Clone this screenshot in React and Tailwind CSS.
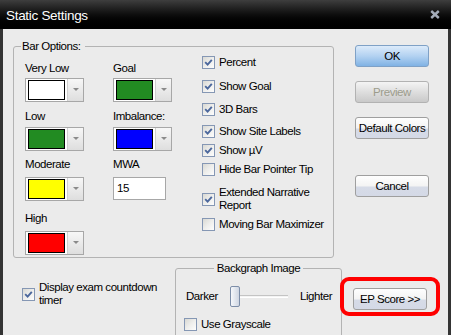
import React from "react";

function Check({ checked }) {
  return (
    <span className="w-[13px] h-[13px] shrink-0 border border-[#8597b4] bg-gradient-to-br from-[#d9d9d4] via-[#eeeeec] to-[#fdfdfd] flex items-center justify-center">
      {checked && (
        <svg width="9" height="9" viewBox="0 0 9 9">
          <path d="M1.2 4.2 L3.6 6.6 L7.8 1.8" stroke="#4b679c" strokeWidth="1.9" fill="none" />
        </svg>
      )}
    </span>
  );
}

function CheckRow({ checked, children, className = "" }) {
  return (
    <div className={"flex items-center gap-[4px] " + className}>
      <Check checked={checked} />
      <span>{children}</span>
    </div>
  );
}

function Swatch({ color, className = "" }) {
  return (
    <div className={"w-[59px] h-[24px] border border-[#a7a7a7] flex " + className}>
      <div className="w-[41px] bg-white px-[2px] py-[1px] flex">
        <div className="flex-1 border border-black" style={{ background: color }} />
      </div>
      <div className="flex-1 border-l border-[#cfcfcf] bg-gradient-to-b from-[#f7f7f7] to-[#dedede] flex items-center justify-center">
        <svg width="6" height="4" viewBox="0 0 6 4">
          <path d="M0 0 H6 L3 3 Z" fill="#8a8a8a" />
        </svg>
      </div>
    </div>
  );
}

function Btn({ children, variant = "normal", className = "" }) {
  const styles = {
    ok: "border-[#7fa1c6] bg-gradient-to-b from-[#dcebfa] via-[#b3d2f1] to-[#80b2e4] text-black",
    disabled: "border-[#b2b2b2] bg-gradient-to-b from-[#f4f4f4] via-[#dedede] to-[#c9c9c9] text-[#9c9c8c]",
    normal: "border-[#9f9f9f] bg-[linear-gradient(to_bottom,#fefefe_0%,#f3f3f3_52%,#d6dbe7_53%,#d4d9e6_100%)] text-black",
  };
  return (
    <div className={"w-[74px] h-[22px] rounded-[3px] border flex items-center justify-center whitespace-nowrap " + styles[variant] + " " + className}>
      {children}
    </div>
  );
}

export default function App() {
  return (
    <div className="w-[451px] h-[335px] overflow-hidden flex flex-col font-['Liberation_Sans',Arial,sans-serif] text-[11.5px] tracking-[-0.45px] leading-[13px] text-black">
      <div className="h-[29px] shrink-0 flex items-center justify-between pl-[6px] pr-[11px] bg-gradient-to-b from-[#3e3e3e] via-[#0e0e0e] to-[#000000]">
        <span className="text-[13.5px] tracking-[-0.3px] text-white pt-[1px]">Static Settings</span>
        <svg width="10" height="9" viewBox="0 0 10 9">
          <path d="M1.2 1 L8.8 8 M8.8 1 L1.2 8" stroke="#a4acb9" strokeWidth="2.4" />
        </svg>
      </div>
      <div className="flex-1 bg-[#ebebeb] border-x-[3px] border-[#343434]">
        <div className="flex items-start">
          <fieldset className="ml-[10px] mt-[11px] w-[321px] h-[218px] border border-[#b3b3b3] rounded-[3px] pl-[11px]">
            <legend className="ml-[-4px] pl-[1px] pr-[4px] leading-[13px]">Bar Options:</legend>
            <div className="flex">
              <div className="w-[88px] flex flex-col">
                <span className="mt-[9px]">Very Low</span>
                <Swatch color="#ffffff" className="mt-[3px]" />
                <span className="mt-[8px]">Low</span>
                <Swatch color="#228b22" className="mt-[4px]" />
                <span className="mt-[7px]">Moderate</span>
                <Swatch color="#ffff00" className="mt-[6px]" />
                <span className="mt-[11px]">High</span>
                <Swatch color="#ff0000" className="mt-[6px]" />
              </div>
              <div className="w-[89px] flex flex-col">
                <span className="mt-[9px]">Goal</span>
                <Swatch color="#228b22" className="mt-[3px]" />
                <span className="mt-[8px]">Imbalance:</span>
                <Swatch color="#0000ff" className="mt-[4px]" />
                <span className="mt-[7px]">MWA</span>
                <div className="mt-[6px] w-[53px] h-[23px] border border-[#a7a7a7] bg-white flex items-center pl-[3px]">15</div>
              </div>
              <div className="flex flex-col">
                <CheckRow checked className="mt-[3px]">Percent</CheckRow>
                <CheckRow checked className="mt-[11px]">Show Goal</CheckRow>
                <CheckRow checked className="mt-[10px]">3D Bars</CheckRow>
                <CheckRow checked className="mt-[9px]">Show Site Labels</CheckRow>
                <CheckRow checked className="mt-[6px]">Show µV</CheckRow>
                <CheckRow className="mt-[6px]">Hide Bar Pointer Tip</CheckRow>
                <CheckRow checked className="mt-[10px]">
                  Extended Narrative
                  <br />
                  Report
                </CheckRow>
                <CheckRow className="mt-[6px] whitespace-nowrap">Moving Bar Maximizer</CheckRow>
              </div>
            </div>
          </fieldset>
          <div className="ml-[21px] mt-[16px] flex flex-col w-[74px]">
            <Btn variant="ok">OK</Btn>
            <Btn variant="disabled" className="mt-[14px]">Preview</Btn>
            <Btn className="mt-[14px]">Default Colors</Btn>
            <Btn className="mt-[36px]">Cancel</Btn>
          </div>
        </div>
        <div className="flex items-start mt-[4px]">
          <div className="ml-[19px] w-[153px] mt-[19px] flex items-center gap-[4px]">
            <Check checked />
            <span className="w-[130px]">Display exam countdown timer</span>
          </div>
          <fieldset className="w-[167px] h-[100px] border border-[#b3b3b3] rounded-[3px] px-[8px]">
            <legend className="mx-auto px-[3px] leading-[13px]">Backgraph Image</legend>
            <div className="mt-[11px] h-[21px] flex items-center">
              <span className="ml-[2px] w-[44px]">Darker</span>
              <div className="w-[58px] h-[21px] relative flex items-center">
                <div className="absolute left-[8px] right-0 top-[9px] h-[3px] border-t border-[#c4c4c4] bg-[#f4f4f4] border-b border-b-white" />
                <div className="relative w-[10px] h-[21px] rounded-[2px] border border-[#7d8ea8] bg-gradient-to-r from-[#f6f8fb] to-[#cfd6e2]" />
              </div>
              <span className="ml-[12px]">Lighter</span>
            </div>
            <CheckRow className="mt-[11px]">Use Grayscale</CheckRow>
          </fieldset>
          <div className="ml-[-2px] mt-[15px] border-4 border-[#ff0000] rounded-[9px] px-[9px] pt-[7px] pb-[2px]">
            <Btn className="h-[21px]">EP Score &gt;&gt;</Btn>
          </div>
        </div>
      </div>
    </div>
  );
}
